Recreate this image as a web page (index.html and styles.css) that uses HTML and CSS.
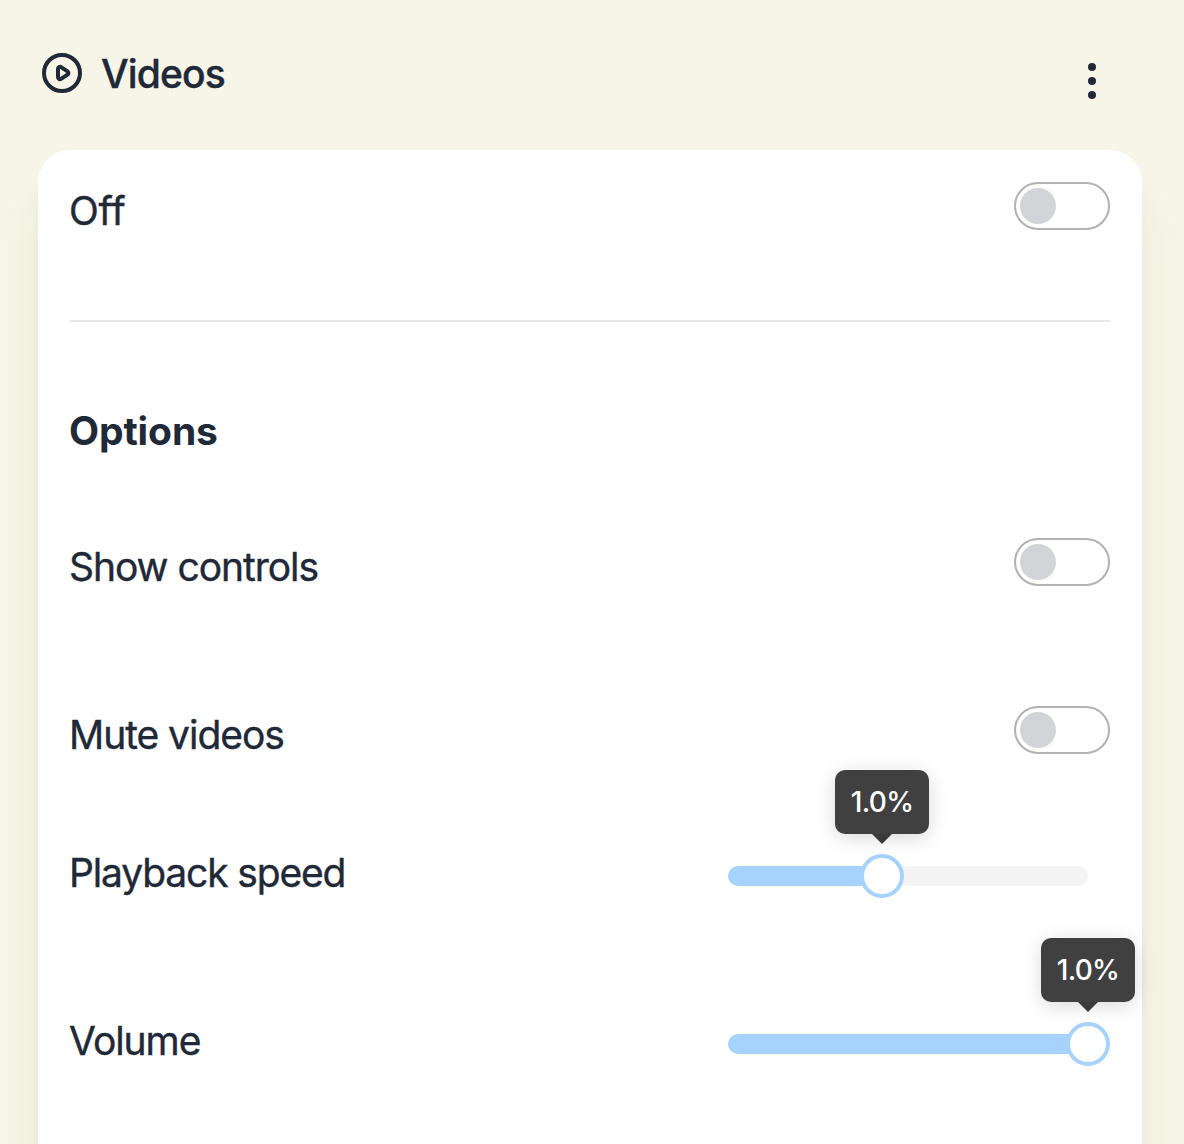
FILE: index.html
```html
<!DOCTYPE html>
<html lang="en">
<head>
<meta charset="utf-8">
<title>Videos</title>
<link rel="stylesheet" href="styles.css">
</head>
<body>
<main class="page">
  <header class="header">
    <svg class="play-icon" width="48" height="48" viewBox="0 0 24 24" fill="none" stroke="currentColor" stroke-width="2" stroke-linecap="round" stroke-linejoin="round" aria-hidden="true">
      <path d="M14.752 11.168l-3.197-2.132A1 1 0 0010 9.87v4.263a1 1 0 001.555.832l3.197-2.132a1 1 0 000-1.664z"/>
      <path d="M21 12a9 9 0 11-18 0 9 9 0 0118 0z"/>
    </svg>
    <h1 class="title">Videos</h1>
    <button class="menu" aria-label="Menu"><span class="dot"></span><span class="dot"></span><span class="dot"></span></button>
  </header>
  <section class="card">
    <div class="row">
      <span class="label label-off">Off</span>
      <button class="toggle" aria-label="Enable"><span class="toggle-knob"></span></button>
    </div>
    <hr class="divider">
    <h2 class="subtitle">Options</h2>
    <div class="row row-controls">
      <span class="label">Show controls</span>
      <button class="toggle" aria-label="Show controls"><span class="toggle-knob"></span></button>
    </div>
    <div class="row row-wide">
      <span class="label">Mute videos</span>
      <button class="toggle" aria-label="Mute videos"><span class="toggle-knob"></span></button>
    </div>
    <div class="row row-near">
      <span class="label label-speed">Playback speed</span>
      <div class="slider">
        <div class="fill" style="width: 42.8%"></div>
        <div class="handle" style="left: 42.8%"><span class="tooltip">1.0%</span></div>
      </div>
    </div>
    <div class="row row-wide">
      <span class="label">Volume</span>
      <div class="slider">
        <div class="fill" style="width: 100%"></div>
        <div class="handle" style="left: 100%"><span class="tooltip">1.0%</span></div>
      </div>
    </div>
  </section>
</main>
</body>
</html>
```
FILE: styles.css
```css
* { box-sizing: border-box; }
body {
  margin: 0;
  background: #f7f5e7;
  color: #1f2937;
  font-family: Inter, "Liberation Sans", sans-serif;
}
.page {
  height: 1144px;
  overflow: hidden;
  padding: 0 42px 0 38px;
}
.header {
  display: flex;
  align-items: flex-start;
  height: 150px;
  padding: 45px 38px 0 0;
}
.play-icon { margin: 4px 15px 0 0; }
.title {
  margin: 0;
  font-size: 39px;
  font-weight: 500;
  line-height: 58px;
  letter-spacing: -0.85px;
  -webkit-text-stroke: 0.4px currentColor;
}
.menu {
  display: flex;
  flex-direction: column;
  align-items: center;
  gap: 6px;
  width: 24px;
  margin-left: auto;
  padding: 18px 0 0;
  border: 0;
  background: none;
}
.dot {
  width: 8px;
  height: 8px;
  border-radius: 50%;
  background: #1f2937;
}
.card {
  height: 1200px;
  padding: 32px;
  border-radius: 32px;
  background: #fff;
  box-shadow: 0 40px 50px -10px rgba(0, 60, 40, 0.1), 0 16px 20px -12px rgba(0, 60, 40, 0.1);
}
.row {
  display: flex;
  justify-content: space-between;
  align-items: flex-start;
  height: 58px;
}
.row-controls { margin-top: 78px; }
.row-wide { margin-top: 110px; }
.row-near { margin-top: 80px; }
.label {
  margin-left: -1px;
  font-size: 39px;
  line-height: 58px;
  letter-spacing: -1.05px;
  white-space: nowrap;
  -webkit-text-stroke: 0.4px currentColor;
}
.label-off { letter-spacing: -0.3px; }
.label-speed { letter-spacing: -1.15px; }
.divider {
  height: 2px;
  margin: 80px 0;
  border: 0;
  background: #e5e7eb;
}
.subtitle {
  margin: 0 0 0 -1px;
  font-size: 39px;
  font-weight: 700;
  line-height: 58px;
  letter-spacing: -0.1px;
}
.toggle {
  display: flex;
  align-items: center;
  width: 96px;
  height: 48px;
  padding: 0 4px;
  border: 2px solid #b1b1b6;
  border-radius: 24px;
  background: #fff;
}
.toggle-knob {
  width: 36px;
  height: 36px;
  border-radius: 50%;
  background: #d2d4d8;
}
.slider {
  position: relative;
  width: 360px;
  height: 20px;
  margin: 22px 22px 0 0;
  border-radius: 10px;
  background: #f4f4f4;
}
.fill {
  height: 20px;
  border-radius: 10px;
  background: #a6d3fb;
}
.handle {
  position: absolute;
  top: -12px;
  width: 44px;
  height: 44px;
  margin-left: -22px;
  border: 4px solid #a6d3fb;
  border-radius: 50%;
  background: #fff;
}
.tooltip {
  position: absolute;
  top: -88px;
  left: -29px;
  width: 94px;
  height: 64px;
  border-radius: 10px;
  background: #404040;
  box-shadow: 0 4px 20px rgba(0, 0, 0, 0.15);
  color: #fff;
  font-size: 28px;
  font-weight: 500;
  line-height: 65px;
  letter-spacing: -0.7px;
  text-align: center;
}
.tooltip::after {
  content: "";
  position: absolute;
  top: 64px;
  left: 37px;
  border: 10px solid transparent;
  border-top-color: #3a3a3a;
  border-bottom: 0;
}
```
